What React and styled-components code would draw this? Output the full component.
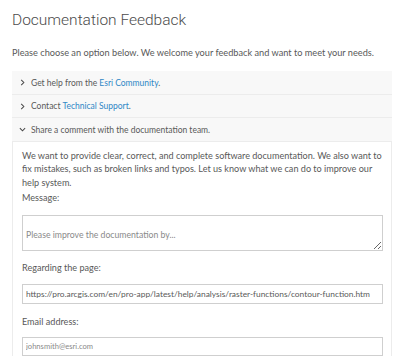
import React from "react";
import styled, { createGlobalStyle } from "styled-components";

const Global = createGlobalStyle`
  html, body { margin: 0; padding: 0; background: #fff; }
  body { font-family: Lato, "Open Sans", sans-serif; color: #595959; }
  * { box-sizing: border-box; }
`;

const Page = styled.div`
  padding: 10px 8px 0 12px;
  width: 400px;
  height: 363px;
  overflow: hidden;
`;

const Title = styled.h1`
  margin: 0;
  font-family: Roboto, Lato, sans-serif;
  font-size: 15.5px;
  font-weight: 300;
  color: #4c4c4c;
  line-height: 20px;
`;

const Intro = styled.p`
  margin: 17px 0 0;
  font-size: 9.2px;
  line-height: 12px;
  color: #595959;
`;

const Accordion = styled.div`
  margin-top: 12px;
  width: 380px;
`;

const Header = styled.div`
  display: flex;
  align-items: center;
  gap: 5px;
  height: ${(p) => p.$h || 24}px;
  padding: 0 0 0 7px;
  background: #f8f8f8;
  border-bottom: 1px solid #ececec;
  font-size: 8.5px;
  color: #595959;
`;

const Link = styled.a`
  color: #2f87c6;
  text-decoration: none;
`;

const Panel = styled.div`
  border-left: 1px solid #ececec;
  border-right: 1px solid #ececec;
  padding: 7px 9px 0;
  display: flex;
  flex-direction: column;
`;

const Body = styled.p`
  margin: 0;
  font-size: 9.1px;
  line-height: 13.3px;
`;

const Label = styled.label`
  font-size: 9.1px;
  line-height: 12px;
  margin-top: ${(p) => p.$top}px;
`;

const TextArea = styled.textarea`
  margin-top: 11px;
  width: 361px;
  height: 36px;
  border: 1px solid #cfcfcf;
  font-family: Lato, sans-serif;
  font-size: 8.7px;
  line-height: 12px;
  padding: 13px 3px 0;
  color: #595959;
  resize: vertical;
  &::placeholder { color: #8a8a8a; }
`;

const Input = styled.input`
  margin-top: ${(p) => p.$top || 10}px;
  width: 361px;
  height: ${(p) => p.$h || 20}px;
  border: 1px solid #cfcfcf;
  font-family: Lato, sans-serif;
  font-size: ${(p) => p.$size || 8}px;
  padding: 0 3px;
  color: #595959;
  &::placeholder { color: #8a8a8a; }
`;

const Chevron = ({ down }) => (
  <svg width="7" height="7" viewBox="0 0 8 8" fill="none" stroke="#4a4a4a" strokeWidth="1.2">
    {down ? <path d="M1 2.5 L4 5.5 L7 2.5" /> : <path d="M2.5 1 L5.5 4 L2.5 7" />}
  </svg>
);

export default function App() {
  return (
    <>
      <Global />
      <Page>
        <Title>Documentation Feedback</Title>
        <Intro>Please choose an option below. We welcome your feedback and want to meet your needs.</Intro>
        <Accordion>
          <Header>
            <Chevron />
            <span>Get help from the <Link href="#">Esri Community</Link>.</span>
          </Header>
          <Header $h={23}>
            <Chevron />
            <span>Contact <Link href="#">Technical Support</Link>.</span>
          </Header>
          <Header>
            <Chevron down />
            <span>Share a comment with the documentation team.</span>
          </Header>
          <Panel>
            <Body>
              We want to provide clear, correct, and complete software documentation. We also want to fix mistakes, such as broken links and typos. Let us know what we can do to improve our help system.
            </Body>
            <Label $top={3}>Message:</Label>
            <TextArea placeholder="Please improve the documentation by..." />
            <Label $top={11}>Regarding the page:</Label>
            <Input $size={8.4} defaultValue="https://pro.arcgis.com/en/pro-app/latest/help/analysis/raster-functions/contour-function.htm" />
            <Label $top={12}>Email address:</Label>
            <Input $top={9} $h={19} $size={7.6} placeholder="johnsmith@esri.com" />
          </Panel>
        </Accordion>
      </Page>
    </>
  );
}
